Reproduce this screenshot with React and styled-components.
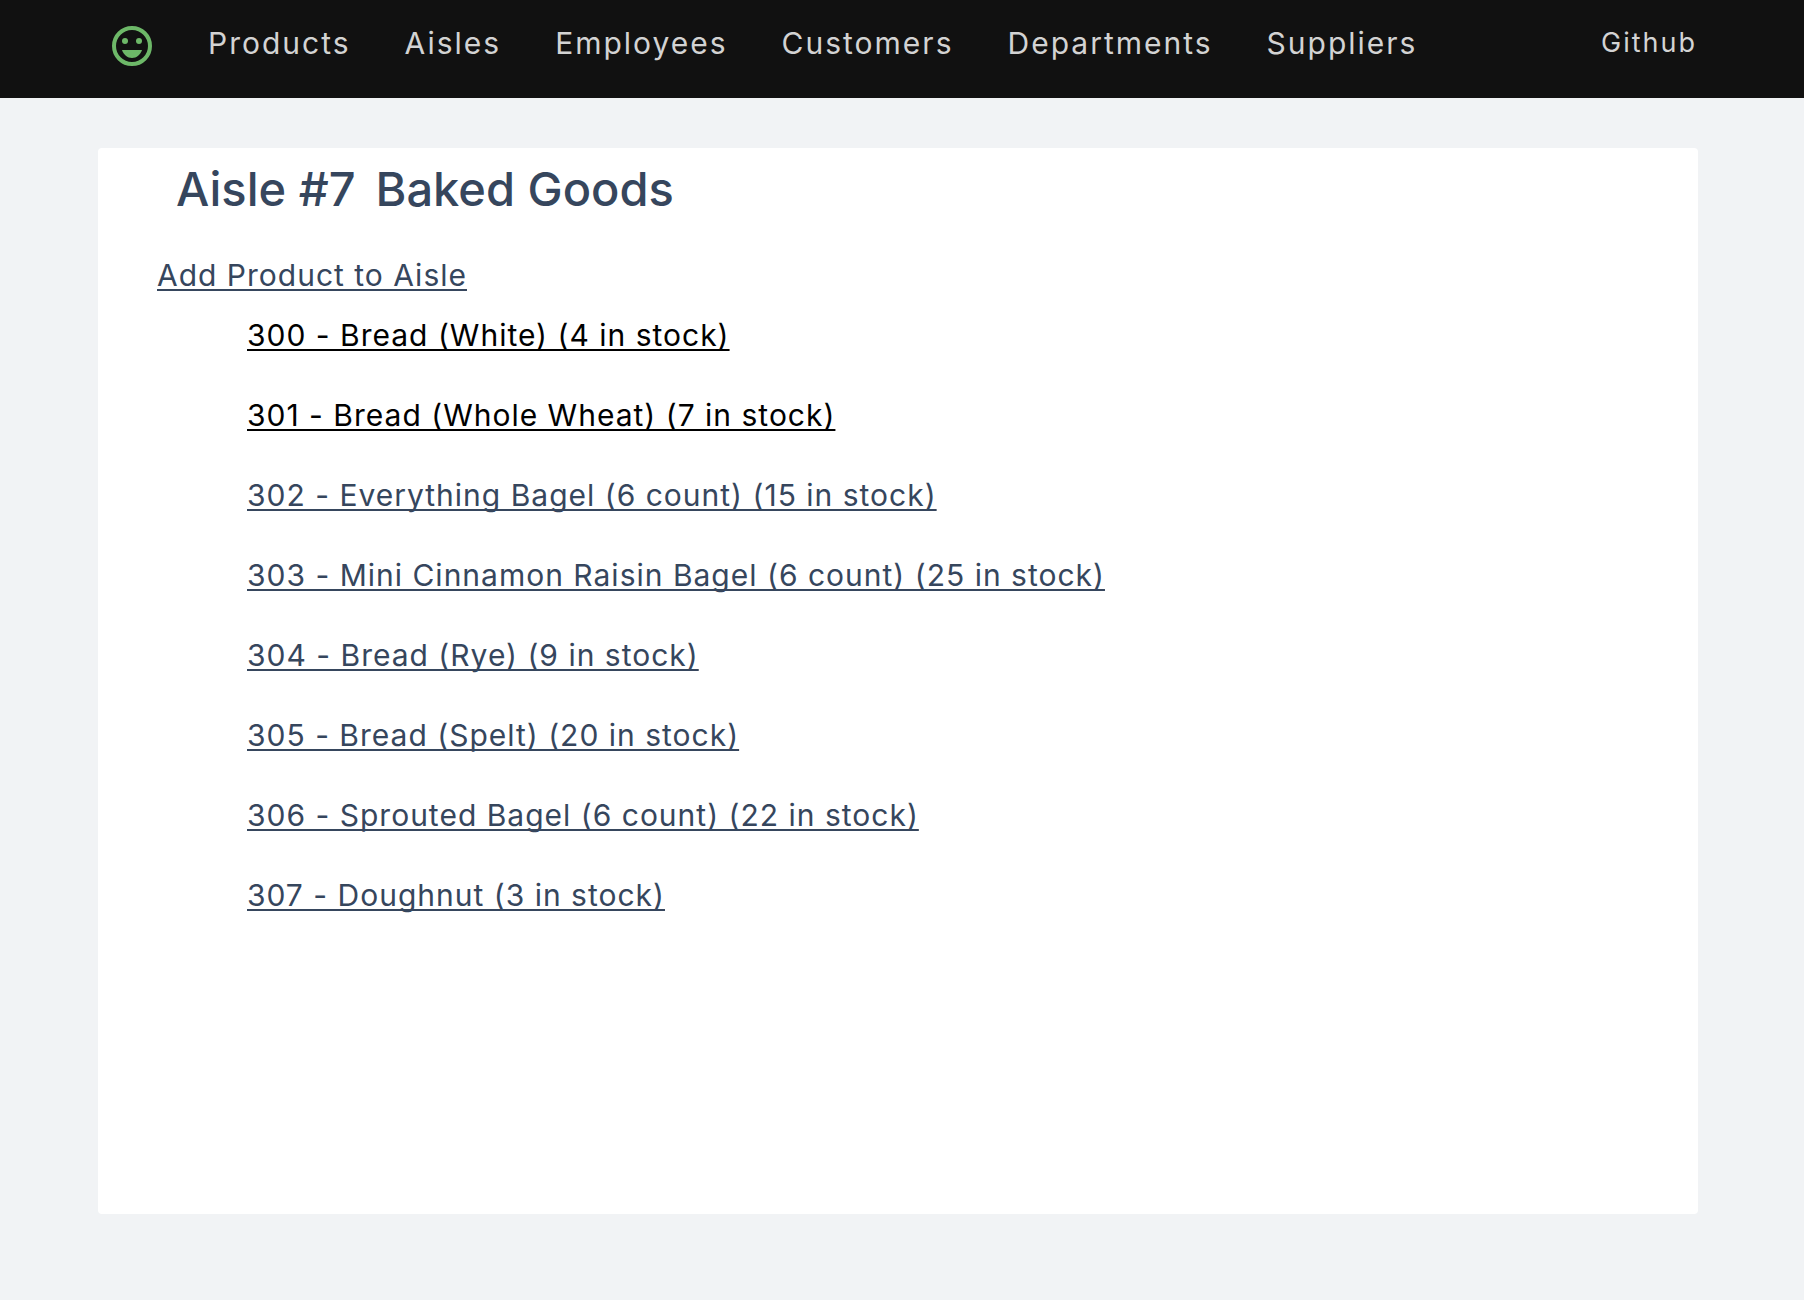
import React from "react";
import styled, { createGlobalStyle } from "styled-components";

const Global = createGlobalStyle`
  * { box-sizing: border-box; }
  body {
    margin: 0;
    background: #f1f3f5;
    color: #36465d;
    font-family: Inter, "Liberation Sans", sans-serif;
    font-size: 30px;
  }
`;

const Header = styled.header`
  background: #111111;
`;

const Nav = styled.nav`
  display: flex;
  align-items: flex-start;
  height: 98px;
  padding: 24px 107px 0 110px;
`;

const Home = styled.a`
  display: flex;
  margin-right: 54px;
  color: #6db868;
`;

const NavList = styled.ul`
  display: flex;
  gap: 54px;
  margin: 0;
  padding: 0;
  list-style: none;
`;

const NavLink = styled.a`
  display: block;
  color: #d3d3d3;
  font-size: ${(p) => (p.$small ? 27 : 30)}px;
  line-height: 38px;
  letter-spacing: 2px;
  text-decoration: none;
`;

const Github = styled(NavLink)`
  margin-left: auto;
`;

const Panel = styled.main`
  min-height: 1066px;
  margin: 50px 106px 86px 98px;
  padding: 11px 59px;
  background: #ffffff;
  border-radius: 4px;
`;

const Title = styled.h1`
  display: flex;
  gap: 20px;
  margin: 0 0 36px 19px;
  font-size: 47px;
  line-height: 60px;
  font-weight: 500;
`;

const TextLink = styled.a`
  color: ${(p) => (p.$visited ? "#000000" : "#36465d")};
  font-size: 30px;
  line-height: 40px;
  letter-spacing: 1px;
  text-decoration: underline;
  text-decoration-thickness: 2px;
  text-decoration-skip-ink: none;
  text-underline-offset: 3px;
`;

const Products = styled.ul`
  display: flex;
  flex-direction: column;
  gap: 40px;
  margin: 20px 0 0;
  padding: 0 0 0 90px;
  list-style: none;
  line-height: 40px;
`;

const pages = ["Products", "Aisles", "Employees", "Customers", "Departments", "Suppliers"];

const products = [
  { id: 300, name: "Bread (White)", stock: 4, visited: true },
  { id: 301, name: "Bread (Whole Wheat)", stock: 7, visited: true },
  { id: 302, name: "Everything Bagel (6 count)", stock: 15 },
  { id: 303, name: "Mini Cinnamon Raisin Bagel (6 count)", stock: 25 },
  { id: 304, name: "Bread (Rye)", stock: 9 },
  { id: 305, name: "Bread (Spelt)", stock: 20 },
  { id: 306, name: "Sprouted Bagel (6 count)", stock: 22 },
  { id: 307, name: "Doughnut", stock: 3 },
];

function Smile() {
  return (
    <svg width="44" height="44" viewBox="0 0 44 44" fill="none" aria-hidden="true">
      <circle cx="22" cy="22" r="18" stroke="currentColor" strokeWidth="4" />
      <circle cx="15" cy="17" r="3" fill="currentColor" />
      <circle cx="29" cy="17" r="3" fill="currentColor" />
      <path d="M12 26H32C30.400 30.700 26.700 34 22 34S13.600 30.700 12 26Z" fill="currentColor" />
    </svg>
  );
}

export default function App() {
  return (
    <>
      <Global />
      <Header>
        <Nav>
          <Home href="#home" aria-label="Home"><Smile /></Home>
          <NavList>
            {pages.map((page) => (
              <li key={page}><NavLink href={`#${page.toLowerCase()}`}>{page}</NavLink></li>
            ))}
          </NavList>
          <Github href="#github" $small>Github</Github>
        </Nav>
      </Header>
      <Panel>
        <Title><span>Aisle #7</span><span>Baked Goods</span></Title>
        <TextLink href="#add">Add Product to Aisle</TextLink>
        <Products>
          {products.map((p) => (
            <li key={p.id}>
              <TextLink href={`#product-${p.id}`} $visited={p.visited}>
                {`${p.id} - ${p.name} (${p.stock} in stock)`}
              </TextLink>
            </li>
          ))}
        </Products>
      </Panel>
    </>
  );
}
